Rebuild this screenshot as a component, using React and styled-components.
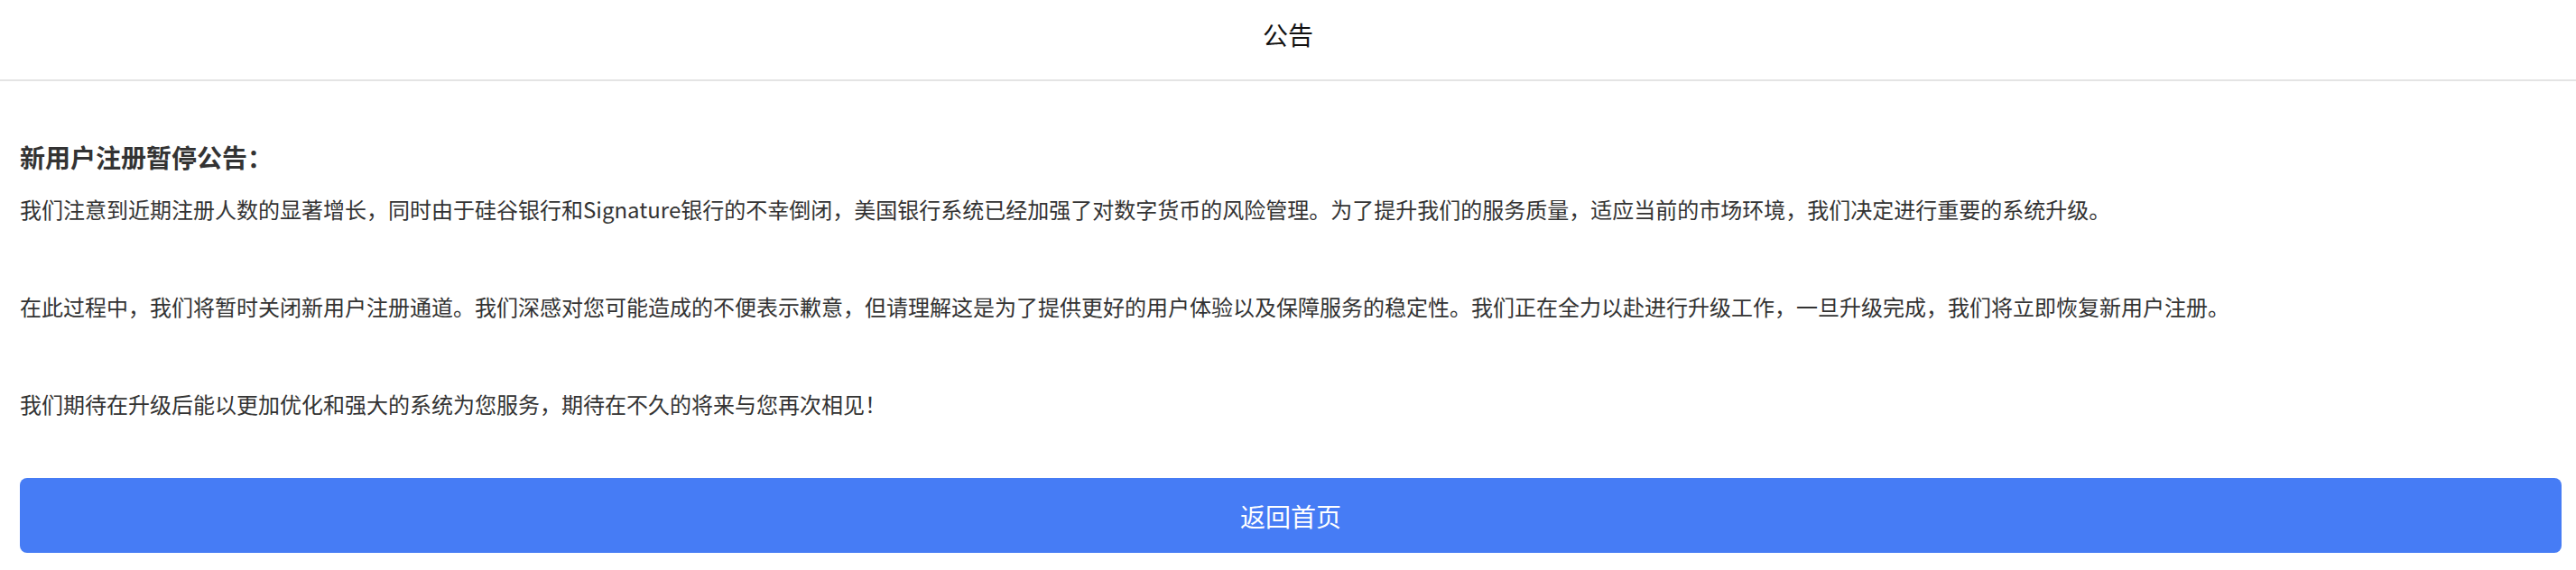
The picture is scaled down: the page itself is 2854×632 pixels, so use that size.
import React from 'react';
import styled, { createGlobalStyle } from 'styled-components';

const GlobalStyle = createGlobalStyle`
  html, body {
    margin: 0;
    padding: 0;
    background: #fff;
  }
  body {
    font-family: "Noto Sans CJK SC", "Noto Sans", sans-serif;
    color: #333;
  }
`;

const Page = styled.div`
  display: flex;
  flex-direction: column;
  min-height: 632px;
`;

const Header = styled.header`
  align-items: center;
  border-bottom: 2px solid #e4e4e4;
  box-sizing: border-box;
  display: flex;
  height: 90px;
  justify-content: center;
  padding-bottom: 12px;
`;

const Title = styled.h1`
  color: #111;
  font-size: 28px;
  font-weight: 400;
  line-height: 28px;
  margin: 0;
`;

const Main = styled.main`
  display: flex;
  flex-direction: column;
  padding: 64px 16px 0 22px;
`;

const Heading = styled.h2`
  color: #333;
  font-size: 28px;
  font-weight: 700;
  line-height: 40px;
  margin: 0 0 20px;
`;

const Paragraph = styled.p`
  color: #333;
  font-size: 24px;
  line-height: 36px;
  margin: 0 0 72px;
  &:last-of-type {
    margin-bottom: 64px;
  }
`;

const HomeButton = styled.button`
  background: #467cf5;
  border: none;
  border-radius: 8px;
  color: #fff;
  cursor: pointer;
  font-family: inherit;
  font-size: 28px;
  height: 83px;
  width: 100%;
`;

const paragraphs = [
  '我们注意到近期注册人数的显著增长，同时由于硅谷银行和Signature银行的不幸倒闭，美国银行系统已经加强了对数字货币的风险管理。为了提升我们的服务质量，适应当前的市场环境，我们决定进行重要的系统升级。',
  '在此过程中，我们将暂时关闭新用户注册通道。我们深感对您可能造成的不便表示歉意，但请理解这是为了提供更好的用户体验以及保障服务的稳定性。我们正在全力以赴进行升级工作，一旦升级完成，我们将立即恢复新用户注册。',
  '我们期待在升级后能以更加优化和强大的系统为您服务，期待在不久的将来与您再次相见！',
];

export default function App() {
  return (
    <Page>
      <GlobalStyle />
      <Header>
        <Title>公告</Title>
      </Header>
      <Main>
        <Heading>新用户注册暂停公告：</Heading>
        {paragraphs.map((text) => (
          <Paragraph key={text.slice(0, 8)}>{text}</Paragraph>
        ))}
        <HomeButton>返回首页</HomeButton>
      </Main>
    </Page>
  );
}
